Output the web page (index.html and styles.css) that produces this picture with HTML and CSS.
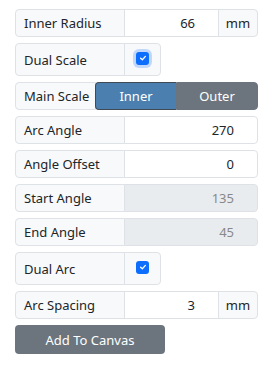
FILE: index.html
```html
<!DOCTYPE html>
<html lang="en">
<head>
    <meta charset="UTF-8">
    <meta name="viewport" content="width=device-width, initial-scale=1.0">
    <title>Arc Scale</title>
    <link rel="stylesheet" href="styles.css">
</head>
<body>
    <div class="panel">
        <div class="input-group">
            <span class="label">Inner Radius</span>
            <span class="field">66</span>
            <span class="unit">mm</span>
        </div>
        <div class="input-group check-group">
            <span class="label">Dual Scale</span>
            <span class="check-cell"><span class="check focused"><svg viewBox="0 0 10 10" width="8" height="8"><path d="M2 5.2 L4.2 7.2 L8 3" fill="none" stroke="white" stroke-width="1.6" stroke-linecap="round" stroke-linejoin="round"/></svg></span></span>
        </div>
        <div class="input-group">
            <span class="label short">Main Scale</span>
            <div class="toggle">
                <button class="active">Inner</button>
                <button>Outer</button>
            </div>
        </div>
        <div class="input-group">
            <span class="label">Arc Angle</span>
            <span class="field">270</span>
        </div>
        <div class="input-group">
            <span class="label">Angle Offset</span>
            <span class="field">0</span>
        </div>
        <div class="input-group">
            <span class="label">Start Angle</span>
            <span class="field disabled">135</span>
        </div>
        <div class="input-group">
            <span class="label">End Angle</span>
            <span class="field disabled">45</span>
        </div>
        <div class="input-group check-group">
            <span class="label">Dual Arc</span>
            <span class="check-cell"><span class="check"><svg viewBox="0 0 10 10" width="8" height="8"><path d="M2 5.2 L4.2 7.2 L8 3" fill="none" stroke="white" stroke-width="1.6" stroke-linecap="round" stroke-linejoin="round"/></svg></span></span>
        </div>
        <div class="input-group">
            <span class="label">Arc Spacing</span>
            <span class="field">3</span>
            <span class="unit">mm</span>
        </div>
        <button class="add-btn">Add To Canvas</button>
    </div>
</body>
</html>
```

FILE: styles.css
```css
body {
    margin: 0;
    background-color: white;
    font-family: "Noto Sans", "Open Sans", sans-serif;
    font-size: 13px;
    color: #212529;
}
.panel {
    width: 243px;
    padding: 9px 0 0 15px;
    display: flex;
    flex-direction: column;
    align-items: flex-start;
    gap: 6px;
}
.input-group {
    display: flex;
    width: 243px;
    height: 28px;
    box-sizing: border-box;
}
.input-group > * {
    border: 1px solid #dee2e6;
    box-sizing: border-box;
    display: flex;
    align-items: center;
}
.input-group > * + * {
    margin-left: -1px;
}
.label {
    width: 110px;
    padding-left: 8px;
    background-color: #f8f9fa;
    border-radius: 4px 0 0 4px;
}
.label.short {
    width: 81px;
}
.field {
    flex: 1;
    justify-content: flex-end;
    padding-right: 23px;
    background-color: white;
    border-radius: 0 4px 4px 0;
}
.input-group .field:not(:last-child) {
    border-radius: 0;
}
.field.disabled {
    background-color: #e9ecef;
    color: #888;
}
.unit {
    width: 40px;
    justify-content: center;
    background-color: #f8f9fa;
    border-radius: 0 4px 4px 0;
}
.check-group {
    width: 146px;
    height: 33px;
}
.check-cell {
    flex: 1;
    justify-content: center;
    background-color: #f8f9fa;
    border-radius: 0 4px 4px 0;
}
.check {
    width: 13px;
    height: 13px;
    border-radius: 3px;
    background-color: #0d6efd;
    display: flex;
    align-items: center;
    justify-content: center;
    margin-top: -3px;
}
.check.focused {
    box-shadow: 0 0 0 3px #c2d8fb;
}
.input-group > .toggle {
    flex: 1;
    display: flex;
    align-items: stretch;
    border: none;
}
.toggle button {
    flex: 1;
    border: 1px solid #3f4a55;
    font-family: inherit;
    font-size: 13px;
    color: white;
    background-color: #6c757d;
    padding: 0;
}
.toggle button.active {
    background-color: #4a7fb0;
    border-radius: 4px 0 0 4px;
    border-right: none;
}
.toggle button:last-child {
    border-radius: 0 4px 4px 0;
    border-color: #6c757d;
}
.add-btn {
    width: 150px;
    height: 29px;
    border: none;
    border-radius: 4px;
    background-color: #6c757d;
    color: white;
    font-family: inherit;
    font-size: 13px;
}
```
